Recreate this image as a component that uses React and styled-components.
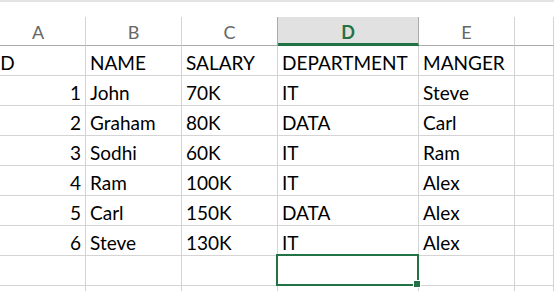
import React from "react";
import styled, { createGlobalStyle, css } from "styled-components";

const Global = createGlobalStyle`
  html, body { margin: 0; padding: 0; background: #fff; }
  body { overflow: hidden; }
`;

const GRID = "#d4d4d4";
const GREEN = "#217346";
const COLS = "95px 96px 96px 141px 96px 1fr";

const Page = styled.div`
  width: 554px;
  height: 291px;
  overflow: hidden;
  background: #fff;
  font-family: Lato, "Open Sans", sans-serif;
`;

const BarEdge = styled.div`
  height: 2px;
  background: #e3e3e3;
  margin-bottom: 15px;
`;

const Sheet = styled.div`
  position: relative;
  margin-left: -9px;
  width: 563px;
`;

const HeaderRow = styled.div`
  display: grid;
  grid-template-columns: ${COLS};
  height: 29px;
`;

const ColHead = styled.div`
  display: flex;
  align-items: center;
  justify-content: center;
  box-sizing: border-box;
  border-right: 1px solid ${(p) => (p.$edge ? "#ababab" : GRID)};
  border-bottom: 1px solid #ababab;
  font-size: 18px;
  color: #666;
  padding-top: 2px;
  ${(p) =>
    p.$active &&
    css`
      background: #e1e1e1;
      color: ${GREEN};
      font-weight: 700;
      border-bottom: 3px solid ${GREEN};
      padding-top: 4px;
    `}
`;

const Row = styled.div`
  display: grid;
  grid-template-columns: ${COLS};
  height: 30px;
`;

const Cell = styled.div`
  box-sizing: border-box;
  border-right: 1px solid ${GRID};
  border-bottom: 1px solid ${GRID};
  display: flex;
  align-items: flex-end;
  justify-content: ${(p) => (p.$num ? "flex-end" : "flex-start")};
  padding: 0 4px 3px 4px;
  font-size: 19px;
  line-height: 1;
  color: #000;
  white-space: nowrap;
  overflow: hidden;
`;

const Selection = styled.div`
  position: absolute;
  left: 285px;
  top: 237px;
  width: 143px;
  height: 32px;
  box-sizing: border-box;
  border: 2px solid ${GREEN};
  pointer-events: none;

  &::after {
    content: "";
    position: absolute;
    right: -4px;
    bottom: -4px;
    width: 6px;
    height: 6px;
    background: ${GREEN};
    border: 1px solid #fff;
  }
`;

const heads = ["A", "B", "C", "D", "E", ""];

const rows = [
  ["ID", "NAME", "SALARY", "DEPARTMENT", "MANGER"],
  [1, "John", "70K", "IT", "Steve"],
  [2, "Graham", "80K", "DATA", "Carl"],
  [3, "Sodhi", "60K", "IT", "Ram"],
  [4, "Ram", "100K", "IT", "Alex"],
  [5, "Carl", "150K", "DATA", "Alex"],
  [6, "Steve", "130K", "IT", "Alex"],
  ["", "", "", "", ""],
  ["", "", "", "", ""],
];

export default function App() {
  return (
    <Page>
      <Global />
      <BarEdge />
      <Sheet>
        <HeaderRow>
          {heads.map((h, i) => (
            <ColHead key={i} $active={h === "D"} $edge={i === 2 || i === 3}>
              {h}
            </ColHead>
          ))}
        </HeaderRow>
        {rows.map((r, ri) => (
          <Row key={ri}>
            {r.map((v, ci) => (
              <Cell key={ci} $num={typeof v === "number"}>
                {v}
              </Cell>
            ))}
            <Cell />
          </Row>
        ))}
        <Selection />
      </Sheet>
    </Page>
  );
}
